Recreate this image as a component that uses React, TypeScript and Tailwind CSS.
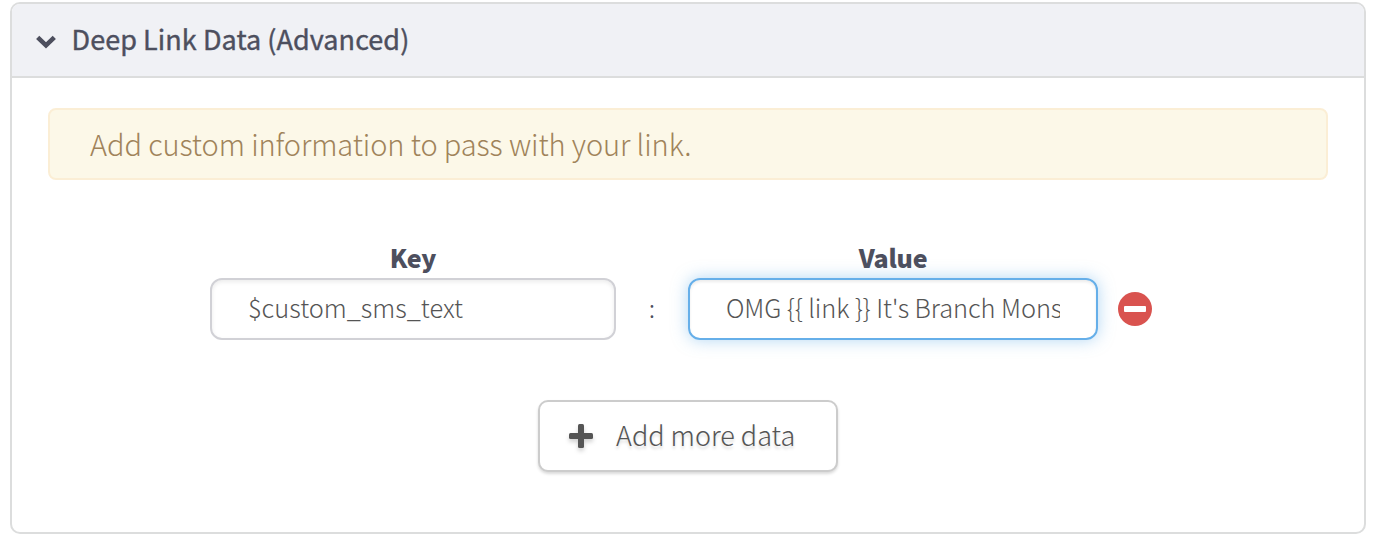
export default function App() {
  return (
    <main className="h-[536px] w-[1378px] overflow-hidden bg-white pt-[2px] pl-[10px] font-['Noto_Sans_CJK_SC','Noto_Sans_CJK_JP',sans-serif] text-[#4d4f5e]">
      <section className="flex h-[532px] w-[1356px] flex-col overflow-hidden rounded-[10px] border-2 border-[#dcdddd] bg-white">
        <header className="flex h-[74px] shrink-0 items-center border-b-2 border-[#dcdddd] bg-[#f0f1f5] pl-[23.5px]">
          <svg className="mt-1 mr-4 h-[14px] w-5" viewBox="0 0 20 14" fill="none" stroke="#4d4f5e" strokeWidth="4.6">
            <path d="M1.7 2.3 10 10.3 18.3 2.3" strokeLinejoin="miter" />
          </svg>
          <h1 className="pb-0.5 text-[27px] leading-[40px] font-normal tracking-[0.06px] whitespace-nowrap [-webkit-text-stroke:0.4px_#4d4f5e]">Deep Link Data (Advanced)</h1>
        </header>
        <div className="flex flex-col items-center px-9 pt-[30px]">
          <p className="flex h-[72px] w-full items-center rounded-lg border-2 border-[#fbeed5] bg-[#fcf8e8] pb-0.5 pl-10 text-[29px] leading-[40px] font-light tracking-[-0.1px] whitespace-nowrap text-[#a0835a]">
            Add custom information to pass with your link.
          </p>
          <div className="mt-[57px] ml-[-14px] grid w-[942px] grid-cols-[406px_72px_410px_54px] grid-rows-[41px_62px] text-[25.4px]">
            <span className="text-center text-[25px] leading-[40px] font-black tracking-[-0.2px]">Key</span>
            <span />
            <span className="text-center text-[25px] leading-[40px] font-black tracking-[-0.2px]">Value</span>
            <span />
            <input
              aria-label="Key"
              defaultValue="$custom_sms_text"
              className="h-[62px] w-full rounded-xl border-2 border-[#d1d1d6] px-9 pb-[5px] font-light text-[#555] shadow-[inset_0_2px_4px_rgba(0,0,0,0.08)] outline-none"
            />
            <span className="flex items-center justify-center pb-[3px] font-light">:</span>
            <input
              aria-label="Value"
              defaultValue="OMG {{ link }} It's Branch Mons"
              className="h-[62px] w-full rounded-xl border-2 border-[#66afe9] px-9 pb-[5px] font-light tracking-[-0.08px] text-[#555] shadow-[inset_0_2px_3px_rgba(0,0,0,0.08),0_0_16px_rgba(102,175,233,0.5)] outline-none"
            />
            <button aria-label="Remove" className="flex items-center justify-end">
              <svg className="size-[34px]" viewBox="0 0 34 34">
                <circle cx="17" cy="17" r="17" fill="#d9534f" />
                <rect x="6" y="14" width="22" height="6" rx="1" fill="#fff" />
              </svg>
            </button>
          </div>
          <button className="mt-[60px] flex h-[72px] w-[300px] items-center rounded-[10px] border-2 border-[#ccc] bg-white pl-[29px] text-[27px] font-light whitespace-nowrap text-[#555] shadow-[0_2px_3px_rgba(0,0,0,0.15)] text-shadow-[0_3px_3px_rgba(0,0,0,0.15)]">
            <svg className="mr-[23px] size-6 drop-shadow-[0_3px_2px_rgba(0,0,0,0.18)]" viewBox="0 0 24 24" fill="#555">
              <rect x="9" width="6" height="24" rx="1.5" />
              <rect y="9" width="24" height="6" rx="1.5" />
            </svg>
            <span className="pb-0.5">Add more data</span>
          </button>
        </div>
      </section>
    </main>
  );
}
